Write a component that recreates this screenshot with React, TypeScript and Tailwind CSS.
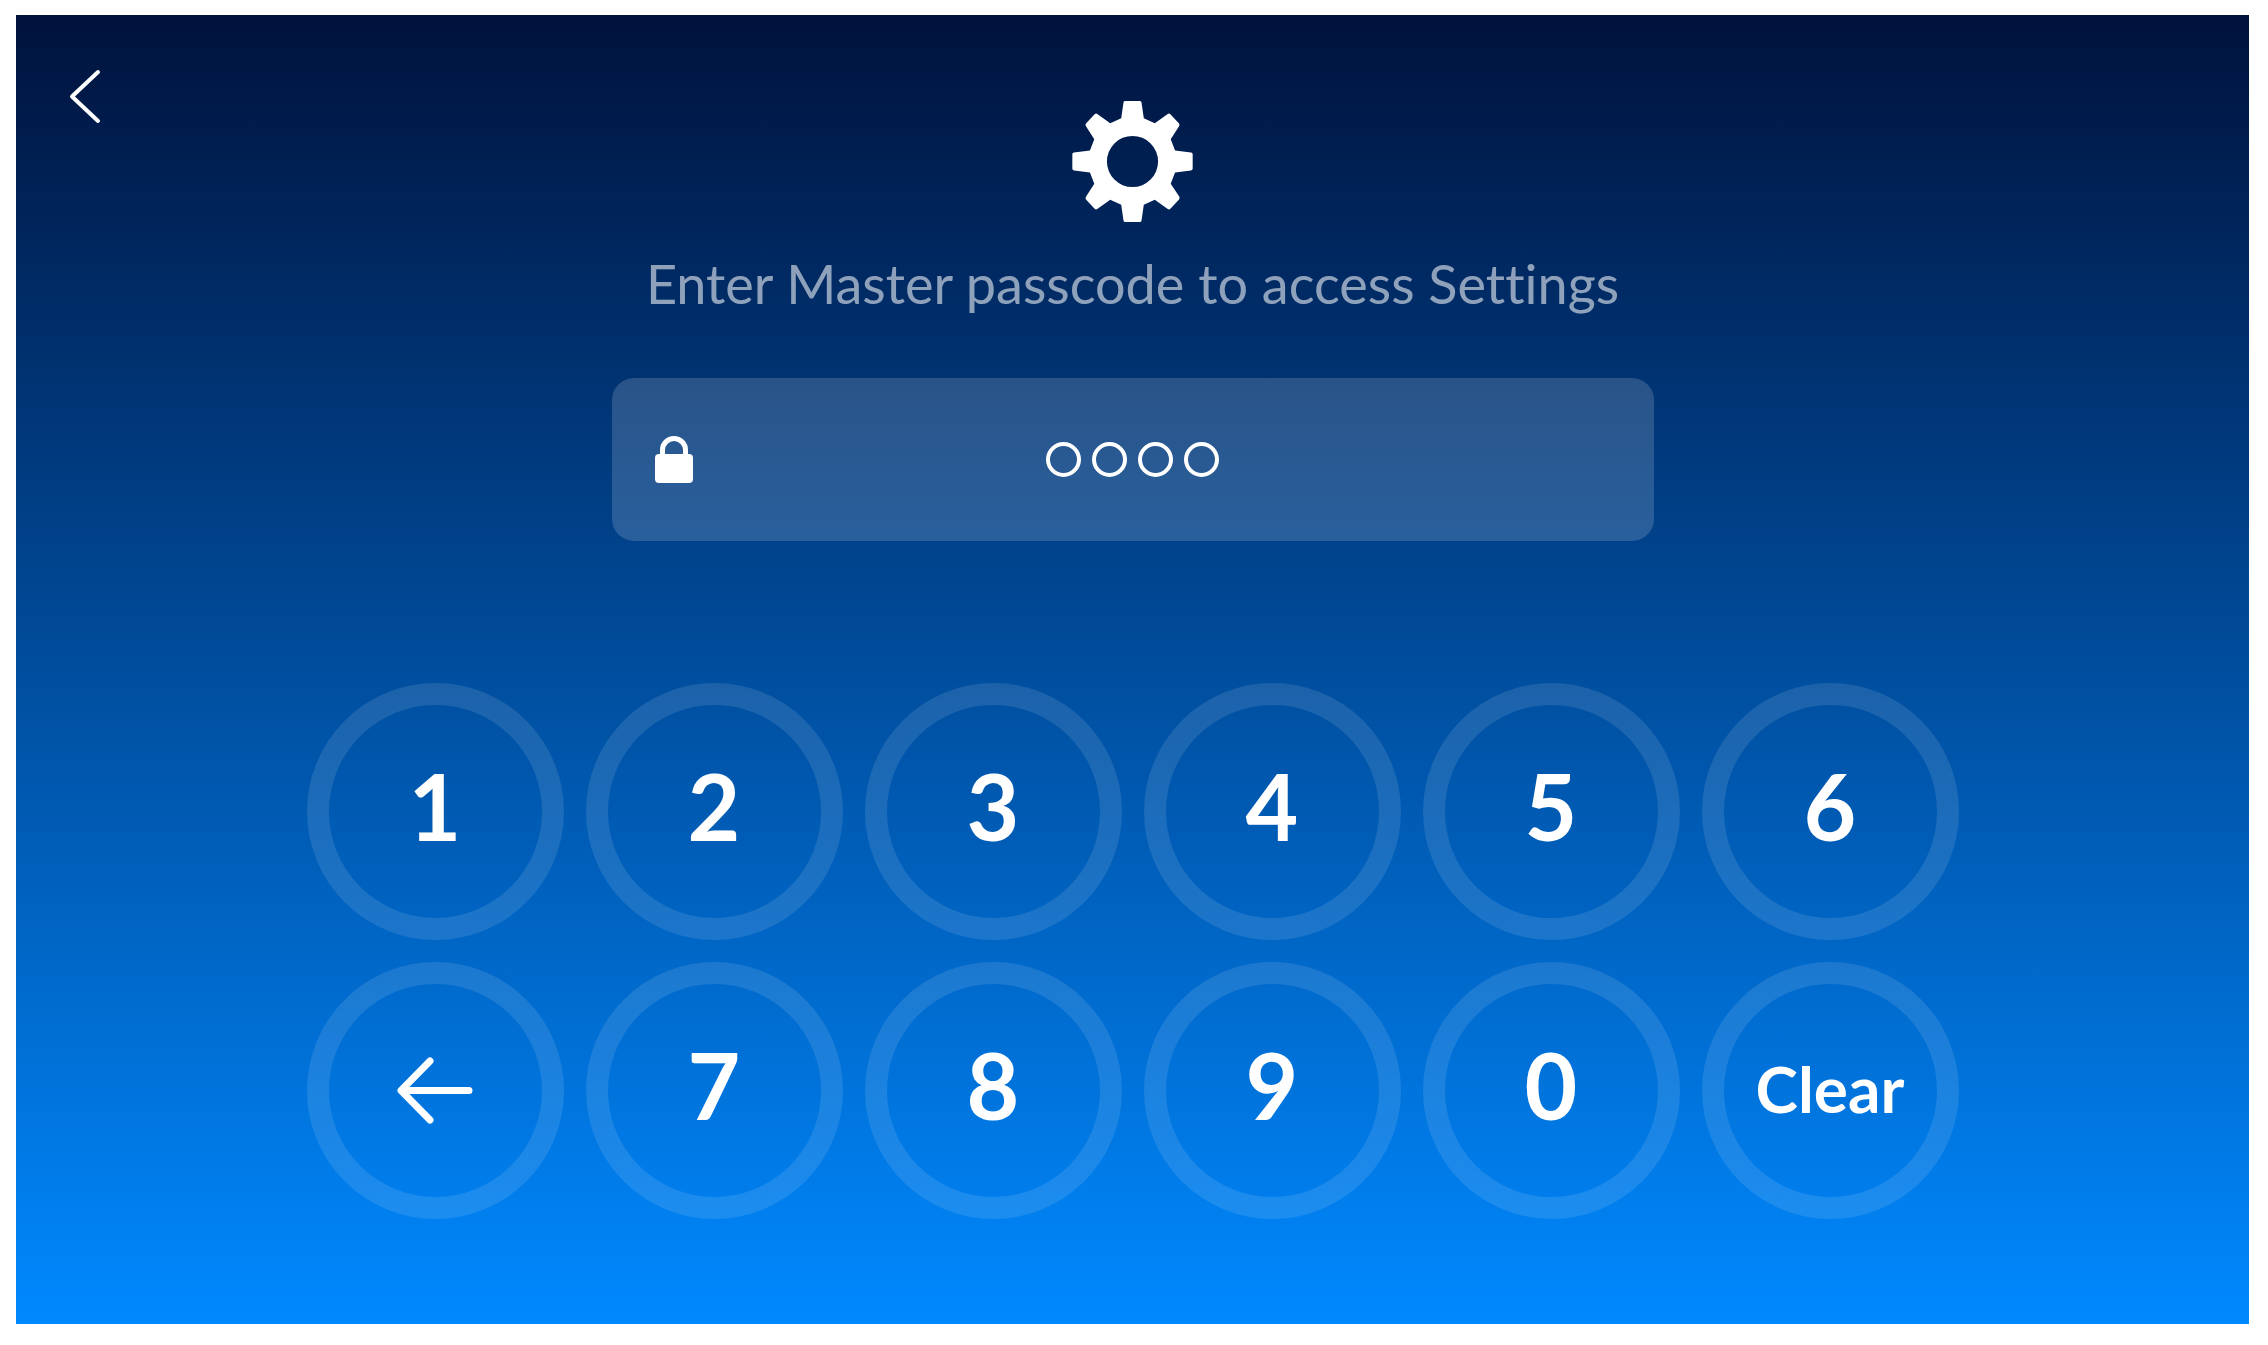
import { useState } from "react"

const PASSCODE_LENGTH = 4

const KEYS = ["1", "2", "3", "4", "5", "6", "back", "7", "8", "9", "0", "clear"]

function ChevronIcon() {
  return (
    <svg viewBox="0 0 34 56" className="h-14 w-[34px]" fill="none" aria-hidden="true">
      <path d="M31 4L5 28.5L31 53" stroke="white" strokeWidth="4" strokeLinecap="round" strokeLinejoin="round" />
    </svg>
  )
}

// Eight teeth around the body, with the centre hole cut out by evenodd
const GEAR_PATH =
  "M-22 -182H22Q26 -182 27 -178L34 -130L67 -115L106 -143Q110 -146 114 -142L140 -114Q143 -110 140 -106L115 -67L128 -33L176 -27Q181 -26 181 -22V22Q181 26 176 27L128 33L115 67L141 106Q143 110 140 114L114 142Q110 146 106 143L67 115L34 130L27 178Q26 182 22 182H-22Q-26 182 -27 178L-34 130L-67 115L-106 143Q-110 146 -114 142L-140 114Q-143 110 -140 106L-115 67L-128 33L-176 27Q-181 26 -181 22V-22Q-181 -26 -176 -27L-128 -33L-115 -67L-140 -106Q-143 -110 -140 -114L-114 -142Q-110 -146 -106 -143L-67 -115L-34 -130L-27 -178Q-26 -182 -22 -182Z M0 -77A77 77 0 1 0 0 77A77 77 0 1 0 0 -77Z"

function GearIcon() {
  return (
    <svg viewBox="-182 -182 364 364" className="size-[121px]" aria-hidden="true">
      <path d={GEAR_PATH} fill="white" fillRule="evenodd" />
    </svg>
  )
}

function LockIcon() {
  return (
    <svg viewBox="0 0 38 48" className="h-12 w-[38px]" fill="none" aria-hidden="true">
      <path d="M7.5 22V14A11.5 11.5 0 0 1 30.5 14V22" stroke="white" strokeWidth="5" />
      <rect y="18" width="38" height="29" rx="4" fill="white" />
    </svg>
  )
}

function ArrowIcon() {
  return (
    <svg viewBox="0 0 78 70" className="h-[70px] w-[78px]" fill="none" aria-hidden="true">
      <path d="M34 5L5 34.5L34 64M6 34.5H73" stroke="white" strokeWidth="7" strokeLinecap="round" strokeLinejoin="round" />
    </svg>
  )
}

export default function App() {
  const [passcode, setPasscode] = useState("")

  const handleKey = (key: string) => {
    if (key === "clear") {
      setPasscode("")
    } else if (key === "back") {
      setPasscode((prev) => prev.slice(0, -1))
    } else {
      setPasscode((prev) => (prev + key).slice(0, PASSCODE_LENGTH))
    }
  }

  return (
    <div className="flex min-h-screen bg-white pt-[15px] pr-[19px] pb-[21px] pl-4 font-['Lato','Noto_Sans',sans-serif]">
      <main className="flex flex-1 flex-col items-center bg-linear-to-b/srgb from-[#00123c] to-[#0089ff] pb-12 text-white">
        {/* Header */}
        <header className="grid w-full grid-cols-[1fr_auto_1fr] px-[51px] pt-[53px]">
          <button type="button" aria-label="Back" className="self-start justify-self-start">
            <ChevronIcon />
          </button>
          <div className="pt-[33px]">
            <GearIcon />
          </div>
        </header>

        <label
          htmlFor="passcode"
          className="mt-8 text-[54px] leading-[60px] text-white/56 [font-variant-ligatures:none]"
        >
          Enter Master passcode to access Settings
        </label>

        {/* Passcode field */}
        <div className="relative mt-16 flex h-[163px] w-full max-w-[1042px] items-center rounded-[22px] bg-white/16 px-[43px]">
          <LockIcon />
          <input
            id="passcode"
            type="password"
            inputMode="numeric"
            autoComplete="off"
            maxLength={PASSCODE_LENGTH}
            value={passcode}
            onChange={(e) => setPasscode(e.target.value.replace(/\D/g, ""))}
            className="h-full min-w-0 flex-1 bg-transparent text-transparent caret-transparent outline-none"
          />
          <div className="pointer-events-none absolute inset-0 flex items-center justify-center gap-[11px]">
            {Array.from({ length: PASSCODE_LENGTH }, (_, i) => (
              <span
                key={i}
                className={`size-[35px] rounded-full border-4 border-white ${i < passcode.length ? "bg-white" : ""}`}
              />
            ))}
          </div>
        </div>

        {/* Keypad */}
        <div className="mt-[142px] grid grid-cols-6 gap-[22px]">
          {KEYS.map((key) => (
            <button
              key={key}
              type="button"
              onClick={() => handleKey(key)}
              aria-label={key === "back" ? "Delete" : undefined}
              className="flex size-[257px] items-center justify-center rounded-full border-[22px] border-white/11 font-bold active:bg-white/10"
            >
              {key === "back" ? (
                <ArrowIcon />
              ) : key === "clear" ? (
                <span className="pb-1 text-[64px] leading-none">Clear</span>
              ) : (
                <span className="pb-3 text-[91px] leading-none">{key}</span>
              )}
            </button>
          ))}
        </div>
      </main>
    </div>
  )
}
